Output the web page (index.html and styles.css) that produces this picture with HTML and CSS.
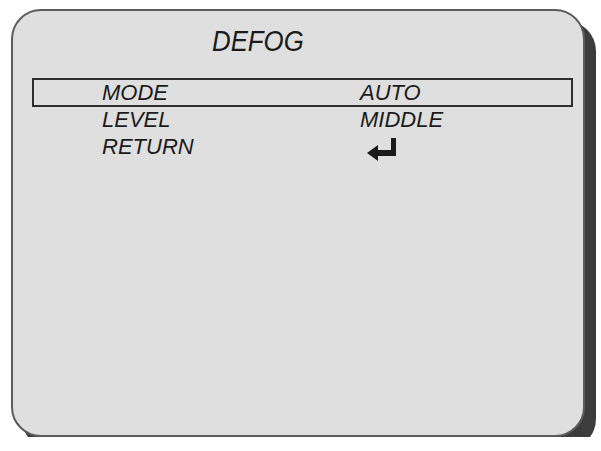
FILE: index.html
```html
<!DOCTYPE html>
<html lang="en">
<head>
    <meta charset="UTF-8">
    <meta name="viewport" content="width=device-width, initial-scale=1.0">
    <title>DEFOG</title>
    <link rel="stylesheet" href="styles.css">
</head>
<body>
    <div class="osd-panel">
        <h1 class="osd-title"><span>DEFOG</span></h1>
        <div class="menu">
            <div class="menu-row selected">
                <span class="label">MODE</span>
                <span class="value">AUTO</span>
            </div>
            <div class="menu-row">
                <span class="label">LEVEL</span>
                <span class="value">MIDDLE</span>
            </div>
            <div class="menu-row">
                <span class="label">RETURN</span>
                <span class="value">
                    <!-- enter / return key -->
                    <svg class="return-icon" width="31" height="25" viewBox="0 0 31 25">
                        <rect x="25" y="1" width="5" height="18" fill="#1b1b1b"/>
                        <rect x="10" y="13" width="20" height="6" fill="#1b1b1b"/>
                        <polygon points="1,16 12,8 12,24" fill="#1b1b1b"/>
                    </svg>
                </span>
            </div>
        </div>
    </div>
</body>
</html>
```

FILE: styles.css
```css
body {
    margin: 0;
    background-color: #fff;
    font-family: "Liberation Sans", Arial, sans-serif;
    color: #1b1b1b;
}
.osd-panel {
    box-sizing: border-box;
    margin: 9px 0 0 11px;
    width: 574px;
    height: 428px;
    padding: 12px 11px 0 20px;
    border: 2px solid #5c5c5c;
    border-radius: 30px;
    background-color: #dfdfdf;
    box-shadow: 11px 12px 0 #3c3c3c;
}
.osd-title {
    margin: 0 0 0 179px;
    font-size: 30px;
    font-weight: normal;
    font-style: italic;
    line-height: 36px;
}
.osd-title span {
    display: inline-block;
    transform: scaleX(0.86);
    transform-origin: left center;
}
.menu {
    margin-top: 20px;
}
.menu-row {
    display: grid;
    grid-template-columns: 327px 1fr;
    height: 27px;
    font-size: 22px;
    font-style: italic;
    line-height: 27px;
}
.menu-row.selected {
    outline: 2px solid #2e2e2e;
    outline-offset: -1px;
}
.label {
    padding-left: 69px;
}
.return-icon {
    display: block;
    margin: 4px 0 0 6px;
}
```
